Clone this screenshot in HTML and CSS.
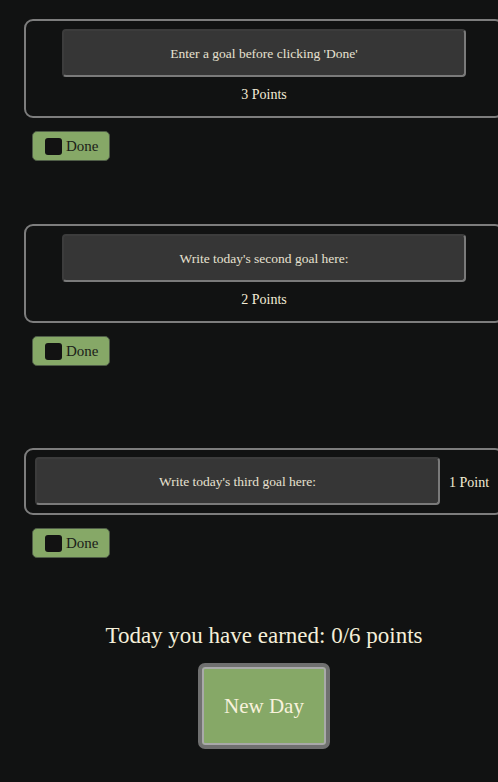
FILE: index.html
```html
<!DOCTYPE html>
<html>
<head>
<meta charset="utf-8">
<link rel="stylesheet" href="styles.css">
</head>
<body>
<main class="app">
  <section class="goal goal-first">
    <div class="card">
      <div class="goal-input">Enter a goal before clicking 'Done'</div>
      <div class="points">3 Points</div>
    </div>
    <button class="done"><span class="box"></span>Done</button>
  </section>
  <section class="goal goal-second">
    <div class="card">
      <div class="goal-input">Write today's second goal here:</div>
      <div class="points">2 Points</div>
    </div>
    <button class="done"><span class="box"></span>Done</button>
  </section>
  <section class="goal goal-third">
    <div class="card card-row">
      <div class="goal-input goal-input-row">Write today's third goal here:</div>
      <div class="points points-row">1 Point</div>
    </div>
    <button class="done"><span class="box"></span>Done</button>
  </section>
  <section class="summary">
    <h2 class="total">Today you have earned: 0/6 points</h2>
    <button class="new-day">New Day</button>
  </section>
</main>
</body>
</html>
```
FILE: styles.css
```css
html, body {
  margin: 0;
  padding: 0;
  background: #111212;
  overflow: hidden;
}
body {
  font-family: "Liberation Serif", "Times New Roman", serif;
  color: #f3ecd6;
}
.app {
  width: 480px;
  margin-left: 24px;
  padding-top: 19px;
  display: flex;
  flex-direction: column;
}
.goal {
  display: flex;
  flex-direction: column;
  align-items: flex-start;
}
.goal-second { margin-top: 63px; }
.goal-third { margin-top: 82px; }
.card {
  box-sizing: border-box;
  width: 480px;
  border: 2px solid #7d7d7d;
  border-radius: 9px;
  padding: 8px 0 12px;
  display: flex;
  flex-direction: column;
  align-items: center;
  gap: 8px;
}
.card-row {
  flex-direction: row;
  align-items: center;
  gap: 9px;
  padding: 7px 9px 8px;
}
.goal-input {
  box-sizing: border-box;
  width: 404px;
  height: 48px;
  background: #363636;
  border: 2px solid;
  border-color: #3c3c3c #7a7a7a #7a7a7a #3c3c3c;
  border-radius: 4px;
  display: flex;
  align-items: center;
  justify-content: center;
  padding-top: 2px;
  font-size: 13.5px;
  color: #e6e1d1;
}
.goal-input-row {
  width: 405px;
}
.points {
  font-size: 14px;
  line-height: 18px;
  padding-top: 1px;
}
.points-row {
  white-space: nowrap;
  padding-top: 4px;
}
.done {
  margin: 13px 0 0 8px;
  box-sizing: border-box;
  width: 78px;
  height: 30px;
  background: #86a867;
  border: 1px solid #4f5d47;
  border-radius: 5px;
  display: flex;
  align-items: center;
  gap: 4px;
  padding: 0 0 0 12px;
  font-family: "Liberation Serif", "Times New Roman", serif;
  font-size: 15px;
  color: #1b1d18;
}
.box {
  width: 17px;
  height: 17px;
  border-radius: 3px;
  background: #121212;
  flex: none;
}
.summary {
  margin-top: 61px;
  display: flex;
  flex-direction: column;
  align-items: center;
}
.total {
  margin: 0;
  font-weight: normal;
  font-size: 23px;
  line-height: 30px;
  padding-top: 2px;
  color: #f5efd9;
}
.new-day {
  margin-top: 12px;
  box-sizing: border-box;
  width: 132px;
  height: 86px;
  background: #86a867;
  border: 4px solid #707070;
  border-radius: 7px;
  box-shadow: inset 0 0 0 2px #a9a9a9;
  font-family: "Liberation Serif", "Times New Roman", serif;
  font-size: 21px;
  color: #f8f2dc;
}
```
